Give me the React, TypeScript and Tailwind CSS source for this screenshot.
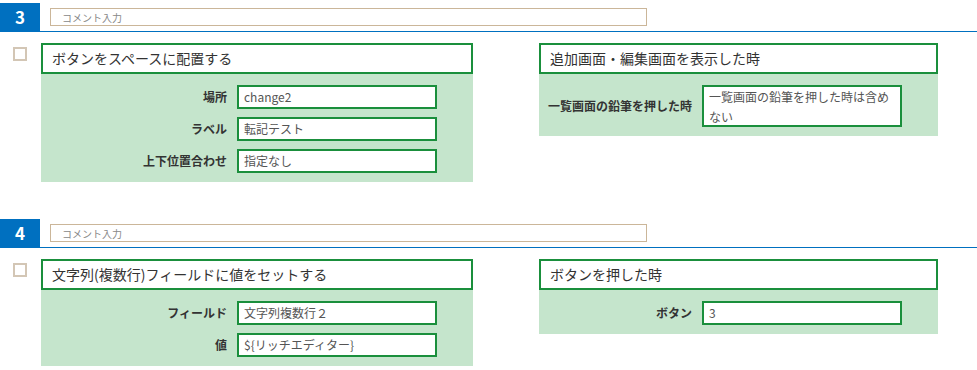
import React from "react";

type Field = { label: string; value: string; multi?: boolean };

type Card = { title: string; fields: Field[] };

type Section = {
  no: number;
  action: Card;
  trigger: Card;
};

const sections: Section[] = [
  {
    no: 3,
    action: {
      title: "ボタンをスペースに配置する",
      fields: [
        { label: "場所", value: "change2" },
        { label: "ラベル", value: "転記テスト" },
        { label: "上下位置合わせ", value: "指定なし" },
      ],
    },
    trigger: {
      title: "追加画面・編集画面を表示した時",
      fields: [
        {
          label: "一覧画面の鉛筆を押した時",
          value: "一覧画面の鉛筆を押した時は含めない",
          multi: true,
        },
      ],
    },
  },
  {
    no: 4,
    action: {
      title: "文字列(複数行)フィールドに値をセットする",
      fields: [
        { label: "フィールド", value: "文字列複数行２" },
        { label: "値", value: "${リッチエディター}" },
      ],
    },
    trigger: {
      title: "ボタンを押した時",
      fields: [{ label: "ボタン", value: "3" }],
    },
  },
];

const FieldRow = ({ field }: { field: Field }) => (
  <div className="flex items-center justify-end gap-[10px] pr-[36px]">
    <span className="text-[12px] font-bold text-[#333]">{field.label}</span>
    {field.multi ? (
      <div className="h-[42px] w-[200px] overflow-hidden border-2 border-[#1a8f3c] bg-white px-[5px] text-[12px] leading-[20px] text-[#555]">
        {field.value}
      </div>
    ) : (
      <div className="flex h-[24px] w-[200px] items-center border-2 border-[#1a8f3c] bg-white px-[5px] text-[12px] text-[#555]">
        {field.value}
      </div>
    )}
  </div>
);

const CardBox = ({ card, width }: { card: Card; width: string }) => (
  <div className={width}>
    <div className="flex h-[31px] items-center border-2 border-[#1a8f3c] bg-white pl-[9px] text-[14px] text-[#333]">
      {card.title}
    </div>
    <div className="flex flex-col gap-[8px] bg-[#c5e5cc] pt-[11px] pb-[9px]">
      {card.fields.map((f, key) => (
        <FieldRow key={key} field={f} />
      ))}
    </div>
  </div>
);

const SectionBlock = ({ section }: { section: Section }) => (
  <div className="mb-[37px]">
    <div className="flex items-start border-b border-[#0070c0]">
      <div className="flex h-[28px] w-[40px] items-center justify-center bg-[#0070c0] text-[17px] font-bold text-white">
        {section.no}
      </div>
      <div className="mt-[5px] ml-[10px] flex h-[18px] w-[597px] items-center border border-[#cbb699] bg-white pl-[11px] text-[10px] text-[#888]">
        コメント入力
      </div>
    </div>
    <div className="mt-[11px] flex items-start">
      <div className="mt-[4px] ml-[13px] h-[14px] w-[14px] border-2 border-[#d3c6b5] bg-white" />
      <div className="ml-[14px]">
        <CardBox card={section.action} width="w-[432px]" />
      </div>
      <div className="ml-[66px]">
        <CardBox card={section.trigger} width="w-[399px]" />
      </div>
    </div>
  </div>
);

export default function App() {
  return (
    <div
      className="h-[370px] w-[977px] overflow-hidden bg-white pt-[3px]"
      style={{ fontFamily: '"Noto Sans CJK JP", "Noto Sans", sans-serif' }}
    >
      {sections.map((s) => (
        <SectionBlock key={s.no} section={s} />
      ))}
    </div>
  );
}
